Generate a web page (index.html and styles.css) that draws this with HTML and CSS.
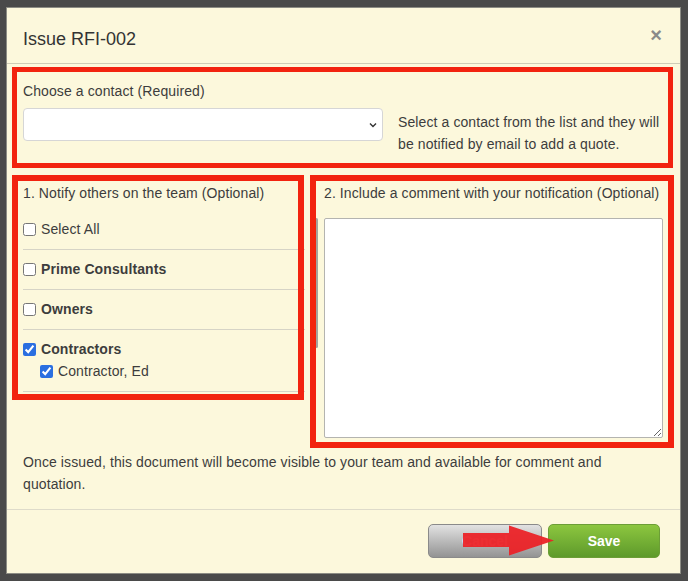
FILE: index.html
```html
<!DOCTYPE html>
<html lang="en">

<head>
	<meta charset="UTF-8">
	<title>Issue RFI-002</title>
	<link rel="stylesheet" href="styles.css">
</head>

<body>
	<div class="modal">

		<div class="modal-header">
			<h4 class="modal-title">Issue RFI-002</h4>
			<span class="close">&times;</span>
		</div>

		<div class="modal-body">
			<div class="contact">
				<label class="field-label">Choose a contact (Required)</label>
				<div class="contact-row">
					<div class="select-wrap">
						<select class="contact-select"></select>
						<svg class="chevron" width="8" height="6" viewBox="0 0 8 6">
							<path d="M1 1.5 L4 4.5 L7 1.5" fill="none" stroke="#333" stroke-width="1.4" />
						</svg>
					</div>
					<p class="hint">Select a contact from the list and they will be notified by email to add a quote.</p>
				</div>
			</div>

			<div class="notify">
				<div class="team-col">
					<div class="col-title">1. Notify others on the team (Optional)</div>
					<ul class="team-list">
						<li class="team-row">
							<label class="check"><input type="checkbox"> Select All</label>
						</li>
						<li class="team-row">
							<label class="check group"><input type="checkbox"> Prime Consultants</label>
						</li>
						<li class="team-row">
							<label class="check group"><input type="checkbox"> Owners</label>
						</li>
						<li class="team-row">
							<label class="check group"><input type="checkbox" checked> Contractors</label>
							<label class="check member"><input type="checkbox" checked> Contractor, Ed</label>
						</li>
					</ul>
					<div class="scroll-thumb"></div>
				</div>

				<div class="comment-col">
					<div class="col-title">2. Include a comment with your notification (Optional)</div>
					<textarea class="comment"></textarea>
				</div>
			</div>

			<p class="notice">Once issued, this document will become visible to your team and available for comment and quotation.</p>
		</div>

		<div class="modal-footer">
			<button class="btn btn-cancel">Cancel</button>
			<button class="btn btn-save">Save</button>
		</div>

		<!-- annotations -->
		<div class="mark mark-contact"></div>
		<div class="mark mark-team"></div>
		<div class="mark mark-comment"></div>
		<svg class="arrow" width="92" height="32" viewBox="0 0 92 32">
			<polygon points="0,8 46,8 46,0.5 91,15.5 46,30.5 46,22 0,22" fill="#ec2227" />
		</svg>
	</div>
</body>

</html>
```

FILE: styles.css
```css
* {
	box-sizing: border-box;
}

body {
	margin: 0;
	padding: 8px 8px 8px 7px;
	background: #4a4a4a;
	font-family: "Liberation Sans", Arial, sans-serif;
	font-size: 14px;
	letter-spacing: 0.1px;
	color: #3d3d3d;
}

.modal {
	position: relative;
	width: 673px;
	background: #fcf8dc;
	outline: 1px solid #8c8c84;
}

.modal-header {
	display: flex;
	justify-content: space-between;
	align-items: flex-start;
	height: 56px;
	padding: 21px 18px 0 16px;
	border-bottom: 1px solid #cfccb6;
}

.modal-title {
	margin: 0;
	font-size: 18px;
	font-weight: normal;
	line-height: 20px;
	letter-spacing: 0;
	color: #333;
}

.close {
	margin-top: -4px;
	font-size: 20px;
	font-weight: bold;
	line-height: 20px;
	color: #8a8a8a;
}

.modal-body {
	padding: 17px 16px 14px;
}

.field-label {
	display: block;
	line-height: 20px;
}

.contact-row {
	display: flex;
	gap: 15px;
	margin-top: 7px;
}

.select-wrap {
	position: relative;
	flex: 0 0 360px;
	height: 33px;
}

.contact-select {
	appearance: none;
	width: 100%;
	height: 33px;
	background: #fff;
	border: 1px solid #d6d6d6;
	border-radius: 4px;
}

.chevron {
	position: absolute;
	top: 14px;
	right: 6px;
}

.hint {
	margin: 3px 0 0;
	line-height: 22px;
}

.notify {
	display: grid;
	grid-template-columns: 295px 1fr;
	column-gap: 6px;
	margin-top: 28px;
}

.col-title {
	line-height: 20px;
}

.team-col {
	position: relative;
}

.team-list {
	list-style: none;
	margin: 7px 13px 0 0;
	padding: 0;
}

.team-row {
	padding: 9px 0 10px;
	border-bottom: 1px solid #d6d4c6;
}

.check {
	display: flex;
	align-items: center;
	gap: 5px;
	line-height: 20px;
}

.check input {
	width: 13px;
	height: 13px;
	margin: 0;
	accent-color: #2b6fe0;
}

.group {
	font-weight: bold;
}

.member {
	margin: 2px 0 0 17px;
}

.scroll-thumb {
	position: absolute;
	top: 35px;
	left: 292px;
	width: 3px;
	height: 130px;
	border-radius: 2px;
	background: #a3a3a0;
}

.comment {
	display: block;
	width: 339px;
	height: 220px;
	margin-top: 15px;
	background: #fff;
	border: 1px solid #b4b4b0;
	border-radius: 2px;
	resize: both;
}

.notice {
	margin: 13px 0 0;
	line-height: 22px;
}

.modal-footer {
	display: flex;
	justify-content: flex-end;
	gap: 6px;
	padding: 14px 20px 15px;
	border-top: 1px solid #dedbca;
}

.btn {
	height: 34px;
	border-radius: 5px;
	font-family: inherit;
	font-size: 14px;
	font-weight: bold;
	color: #fff;
}

.btn-cancel {
	width: 114px;
	background: linear-gradient(180deg, #e2e2e2, #939393);
	border: 1px solid #8a8a8a;
}

.btn-save {
	width: 112px;
	background: linear-gradient(180deg, #8cc63f, #5e9a2b);
	border: 1px solid #6c9e36;
}

/* red annotation frames */

.mark {
	position: absolute;
	border: 6px solid #f2230f;
}

.mark-contact {
	left: 5px;
	top: 59px;
	width: 661px;
	height: 101px;
	border-width: 5px;
}

.mark-team {
	left: 5px;
	top: 167px;
	width: 292px;
	height: 225px;
}

.mark-comment {
	left: 303px;
	top: 167px;
	width: 364px;
	height: 273px;
}

.arrow {
	position: absolute;
	left: 456px;
	top: 517px;
	opacity: 0.94;
}
```
